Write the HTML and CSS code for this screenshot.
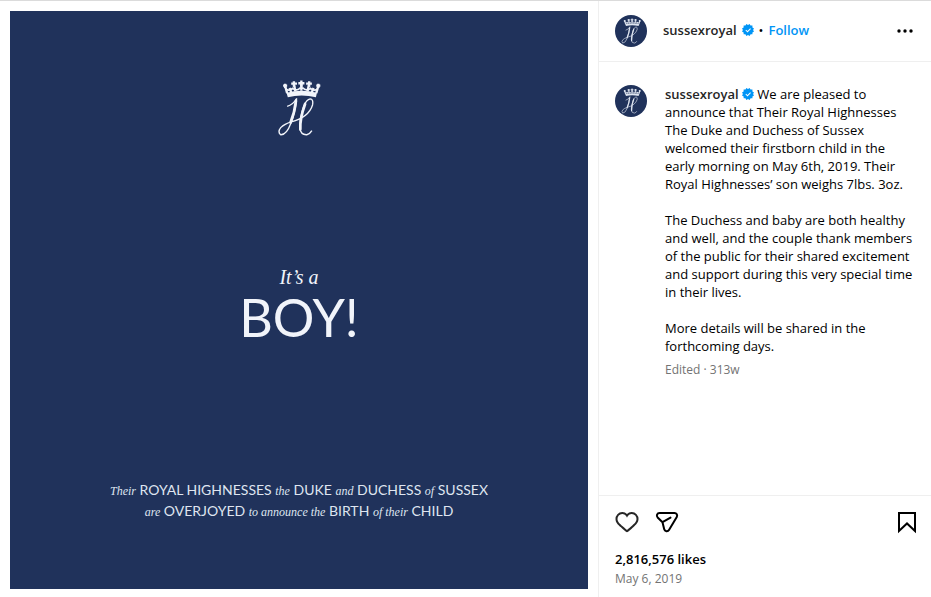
FILE: index.html
```html
<!DOCTYPE html>
<html lang="en">
<head>
    <meta charset="UTF-8">
    <meta name="viewport" content="width=device-width, initial-scale=1.0">
    <title>sussexroyal</title>
    <link rel="stylesheet" href="styles.css">
</head>
<body>

<svg class="defs" aria-hidden="true">
    <symbol id="monogram" viewBox="50 28 130 170">
        <!-- crown -->
        <path d="M78 68Q122 56 168 68L165 81Q122 71 82 81Z" fill="currentColor"/>
        <path d="M80 69 74 48M92 66 87 54M104 64 101 46M122 62V42M140 64 144 46M153 66 158 54M166 69 172 48" fill="none" stroke="currentColor" stroke-width="7"/>
        <path d="M68 47H80M74 41V54M92 41H109M100 34V50M113 40H131M122 32V50M136 41H153M145 34V50M166 47H178M172 41V54" fill="none" stroke="currentColor" stroke-width="7"/>
        <path d="M76 57Q86 64 96 55Q108 64 118 54H127Q138 64 149 55Q160 64 170 57" fill="none" stroke="currentColor" stroke-width="5"/>
        <!-- letter -->
        <path d="M80 108Q97 104 108 85" fill="none" stroke="currentColor" stroke-width="4"/>
        <path d="M108 85Q104 126 91 158Q78 193 61 192Q51 184 61 171Q72 160 92 154Q144 140 155 104Q158 86 148 86Q137 88 129 108Q117 145 117 172Q120 193 138 192Q148 189 153 180" fill="none" stroke="currentColor" stroke-width="4"/>
        <path d="M106 92Q102 127 90 156M133 101Q117 145 119 176" fill="none" stroke="currentColor" stroke-width="8" stroke-linecap="round"/>
    </symbol>
    <symbol id="verified" viewBox="0 0 40 40">
        <path d="M19.998 3.094 14.638 0l-2.972 5.15H5.432v6.354L0 14.64 3.094 20 0 25.359l5.432 3.137v5.905h5.975L14.638 40l5.36-3.094L25.358 40l3.232-5.6h6.162v-6.01L40 25.359 36.905 20 40 14.641l-5.248-3.03v-6.46h-6.419L25.358 0l-5.36 3.094Zm7.415 11.225 2.254 2.287-11.43 11.5-6.835-6.93 2.244-2.258 4.587 4.581 9.18-9.18Z" fill="currentColor" fill-rule="evenodd"/>
    </symbol>
</svg>

<article class="post">
    <div class="media">
        <div class="card">
            <svg class="crest" aria-hidden="true"><use href="#monogram"/></svg>
            <div class="headline">
                <p class="intro">It’s a</p>
                <p class="boy">BOY!</p>
            </div>
            <p class="announcement">
                <em>Their</em> ROYAL HIGHNESSES <em>the</em> DUKE <em>and</em> DUCHESS <em>of</em> SUSSEX<br>
                <em>are</em> OVERJOYED <em>to announce the</em> BIRTH <em>of their</em> CHILD
            </p>
        </div>
    </div>

    <div class="side">
        <header class="header">
            <a class="avatar" href="#" aria-label="sussexroyal"><svg aria-hidden="true"><use href="#monogram"/></svg></a>
            <div class="account">
                <a class="username" href="#">sussexroyal</a>
                <svg class="verified" aria-hidden="true"><use href="#verified"/></svg>
                <span>•</span>
                <button class="follow" type="button">Follow</button>
            </div>
            <button class="icon-button" type="button" aria-label="More options">
                <svg width="24" height="24" viewBox="0 0 24 24"><circle cx="6" cy="12" r="1.7"/><circle cx="12" cy="12" r="1.7"/><circle cx="18" cy="12" r="1.7"/></svg>
            </button>
        </header>

        <div class="comments">
            <a class="avatar" href="#" aria-label="sussexroyal"><svg aria-hidden="true"><use href="#monogram"/></svg></a>
            <div class="caption">
                <p><a class="username" href="#">sussexroyal</a> <svg class="verified" aria-hidden="true"><use href="#verified"/></svg> We are pleased to announce that Their Royal Highnesses The Duke and Duchess of Sussex welcomed their firstborn child in the early morning on May 6th, 2019. Their Royal Highnesses’ son weighs 7lbs. 3oz.</p>
                <p>The Duchess and baby are both healthy and well, and the couple thank members of the public for their shared excitement and support during this very special time in their lives.</p>
                <p>More details will be shared in the forthcoming days.</p>
                <div class="meta">Edited · 313w</div>
            </div>
        </div>

        <footer class="footer">
            <div class="actions">
                <button class="icon-button" type="button" aria-label="Like">
                    <svg class="heart" width="24" height="24" viewBox="0 0 24 24"><path d="M16.792 3.904A4.989 4.989 0 0 1 21.5 9.122c0 3.072-2.652 4.959-5.197 7.222-2.512 2.243-3.865 3.469-4.303 3.752-.477-.309-2.143-1.823-4.303-3.752C5.141 14.072 2.5 12.167 2.5 9.122a4.989 4.989 0 0 1 4.708-5.218 4.21 4.21 0 0 1 3.675 1.941c.84 1.175.98 1.763 1.12 1.763s.278-.588 1.11-1.766a4.17 4.17 0 0 1 3.679-1.938m0-2a6.04 6.04 0 0 0-4.797 2.127 6.052 6.052 0 0 0-4.787-2.127A6.985 6.985 0 0 0 .5 9.122c0 3.61 2.55 5.827 5.015 7.97.283.246.569.494.853.747l1.027.918a44.998 44.998 0 0 0 3.518 3.018 2 2 0 0 0 2.174 0 45.263 45.263 0 0 0 3.626-3.115l.922-.824c.293-.26.59-.519.885-.774 2.334-2.025 4.98-4.32 4.98-7.94a6.985 6.985 0 0 0-6.708-7.218Z"/></svg>
                </button>
                <button class="icon-button" type="button" aria-label="Share">
                    <svg class="line" width="24" height="24" viewBox="0 0 24 24"><path d="M13.973 20.046 21.77 6.928C22.8 5.195 21.55 3 19.535 3H4.466C2.138 3 .984 5.825 2.646 7.456l4.842 4.752 1.723 7.121c.548 2.266 3.571 2.721 4.762.717ZM7.488 12.208 15.515 7.641"/></svg>
                </button>
                <button class="icon-button save" type="button" aria-label="Save">
                    <svg class="line" width="24" height="24" viewBox="0 0 24 24"><path d="M20 21 12 13.44 4 21V3H20Z"/></svg>
                </button>
            </div>
            <a class="likes" href="#">2,816,576 likes</a>
            <time class="date" datetime="2019-05-06">May 6, 2019</time>
        </footer>
    </div>
</article>

</body>
</html>
```
FILE: styles.css
```css
* {
    box-sizing: border-box;
}

body {
    margin: 0;
    font-family: "Open Sans", "Noto Sans", sans-serif;
    font-size: 13px;
    line-height: 18px;
    color: #000;
    background-color: #fff;
}

p {
    margin: 0;
}

a {
    color: inherit;
    text-decoration: none;
}

button {
    padding: 0;
    border: none;
    background: none;
    font: inherit;
    color: inherit;
    cursor: pointer;
}

.defs {
    display: none;
}

.post {
    display: grid;
    grid-template-columns: 1fr 333px;
    min-height: 100vh;
    border-top: 1px solid #dbdbdb;
}

.media {
    padding: 10px 10px 8px;
}

.card {
    display: flex;
    flex-direction: column;
    align-items: center;
    justify-content: space-between;
    aspect-ratio: 1;
    padding: 68px 0;
    background-color: #20325b;
    color: #f1f4fa;
    text-align: center;
}

.crest {
    width: 44px;
    height: 58px;
}

.intro {
    font: italic 20px/24px "Liberation Serif", serif;
}

.boy {
    font: 52px/56px Lato, sans-serif;
    padding-bottom: 6px;
}

.announcement {
    font: 14px/21px Lato, sans-serif;
    color: #dfe5f0;
}

.announcement em {
    font-family: "Liberation Serif", serif;
    font-size: 12px;
    line-height: 1;
}

.side {
    display: flex;
    flex-direction: column;
    border-left: 1px solid #efefef;
}

.header {
    display: flex;
    align-items: center;
    gap: 16px;
    height: 61px;
    padding: 0 14px 0 16px;
    border-bottom: 1px solid #efefef;
}

.avatar {
    display: flex;
    flex-shrink: 0;
    align-items: center;
    justify-content: center;
    width: 32px;
    height: 32px;
    border-radius: 50%;
    background-color: #20325b;
    color: #dfe5f0;
}

.avatar svg {
    width: 20px;
    height: 26px;
}

.account {
    display: flex;
    flex: 1;
    align-items: center;
    gap: 5px;
    padding-bottom: 2px;
}

.username {
    font-weight: 600;
    color: #262626;
}

.verified {
    width: 12px;
    height: 12px;
    color: #0095f6;
    vertical-align: -1px;
}

.follow {
    font-weight: 600;
    color: #0095f6;
}

.icon-button svg {
    display: block;
}

.comments {
    display: flex;
    flex: 1;
    gap: 18px;
    padding: 23px 14px 16px 16px;
}

.caption p {
    margin-bottom: 18px;
}

.caption p:last-of-type {
    margin-bottom: 7px;
}

.meta {
    font-size: 12px;
    line-height: 16px;
    color: #737373;
}

.footer {
    display: flex;
    flex-direction: column;
    align-items: flex-start;
    padding: 14px 12px 9px 16px;
    border-top: 1px solid #efefef;
}

.actions {
    display: flex;
    gap: 16px;
    width: 100%;
    margin-bottom: 16px;
}

.save {
    margin-left: auto;
}

.heart {
    fill: #262626;
}

.line {
    fill: none;
    stroke: #000;
    stroke-width: 2;
    stroke-linejoin: round;
    stroke-linecap: round;
}

.save .line {
    stroke-linejoin: miter;
}

.likes {
    font-weight: 600;
}

.date {
    margin-top: 2px;
    font-size: 12px;
    color: #737373;
}
```
